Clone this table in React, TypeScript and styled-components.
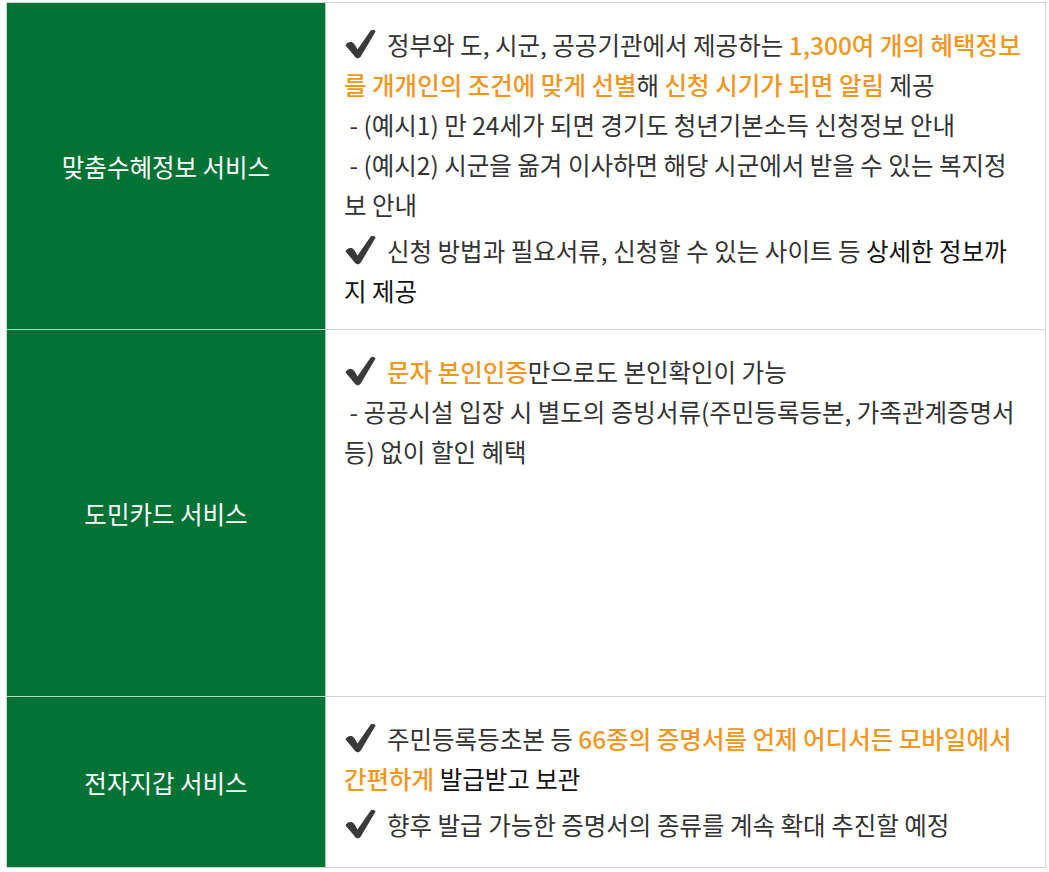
import React from "react";
import styled, { createGlobalStyle } from "styled-components";

const GlobalStyle = createGlobalStyle`
  html, body {
    margin: 0;
    padding: 0;
    background: #ffffff;
  }
  body {
    font-family: "Noto Sans CJK KR", "Noto Sans", sans-serif;
  }
`;

const Table = styled.div`
  box-sizing: border-box;
  width: 1040px;
  margin: 2px 0 0 6px;
  border: 1px solid #d4d4d4;
  display: flex;
  flex-direction: column;
`;

const Row = styled.div<{ $height: number }>`
  display: flex;
  height: ${(p) => p.$height}px;
`;

const Label = styled.div<{ $first?: boolean }>`
  box-sizing: border-box;
  width: 319px;
  flex: none;
  background: #037335;
  border-right: 1px solid #a9cdb3;
  border-top: ${(p) => (p.$first ? "none" : "1px solid #b7d6be")};
  color: #ffffff;
  font-size: 24.5px;
  display: flex;
  align-items: center;
  justify-content: center;
`;

const Content = styled.div<{ $first?: boolean }>`
  box-sizing: border-box;
  flex: 1;
  min-width: 0;
  padding: 22px 0 0 18px;
  border-top: ${(p) => (p.$first ? "none" : "1px solid #d2d2d2")};
  background: #ffffff;
`;

const Item = styled.div<{ $check?: boolean; $first?: boolean }>`
  font-size: 24.5px;
  line-height: 40px;
  color: #333333;
  white-space: nowrap;
  margin-top: ${(p) => (p.$check && !p.$first ? "6px" : "0")};
`;

const Hl = styled.span`
  color: #f1961f;
  font-weight: 500;
`;

const Dark = styled.span`
  color: #111111;
`;

const CheckMark = styled.svg`
  width: 32px;
  height: 30px;
  vertical-align: -4px;
  margin-right: 11px;
`;

const Check = () => (
  <CheckMark viewBox="0 0 32 30" aria-hidden="true">
    <path
      d="M1.5 16.5 Q3 12.5 7.5 13 Q9.5 13.5 11 16 L13.5 20.5 L26.5 1.8 Q29.5 -0.8 31.6 2.6 L16.8 27.6 Q14.6 30.6 11.6 28.6 Q10.4 27.6 9.4 25.8 Z"
      fill="#3a3a3a"
    />
  </CheckMark>
);

export default function App() {
  return (
    <>
      <GlobalStyle />
      <Table>
        <Row $height={326}>
          <Label $first>맞춤수혜정보 서비스</Label>
          <Content $first>
            <Item $check $first>
              <Check />
              정부와 도, 시군, 공공기관에서 제공하는 <Hl>1,300여 개의 혜택정보</Hl>
              <br />
              <Hl>를 개개인의 조건에 맞게 선별</Hl>해 <Hl>신청 시기가 되면 알림</Hl> 제공
            </Item>
            <Item>{"\u00a0- (예시1) 만 24세가 되면 경기도 청년기본소득 신청정보 안내"}</Item>
            <Item>
              {"\u00a0- (예시2) 시군을 옮겨 이사하면 해당 시군에서 받을 수 있는 복지정"}
              <br />
              보 안내
            </Item>
            <Item $check>
              <Check />
              신청 방법과 필요서류, 신청할 수 있는 사이트 등 <Dark>상세한 정보까</Dark>
              <br />
              <Dark>지 제공</Dark>
            </Item>
          </Content>
        </Row>
        <Row $height={367}>
          <Label>도민카드 서비스</Label>
          <Content>
            <Item $check $first>
              <Check />
              <Hl>문자 본인인증</Hl>만으로도 본인확인이 가능
            </Item>
            <Item>
              {"\u00a0- 공공시설 입장 시 별도의 증빙서류(주민등록등본, 가족관계증명서"}
              <br />
              등) 없이 할인 혜택
            </Item>
          </Content>
        </Row>
        <Row $height={171}>
          <Label>전자지갑 서비스</Label>
          <Content>
            <Item $check $first>
              <Check />
              주민등록등초본 등 <Hl>66종의 증명서를 언제 어디서든 모바일에서</Hl>
              <br />
              <Hl>간편하게</Hl> <Dark>발급받고 보관</Dark>
            </Item>
            <Item $check>
              <Check />
              향후 발급 가능한 증명서의 종류를 계속 확대 추진할 예정
            </Item>
          </Content>
        </Row>
      </Table>
    </>
  );
}
